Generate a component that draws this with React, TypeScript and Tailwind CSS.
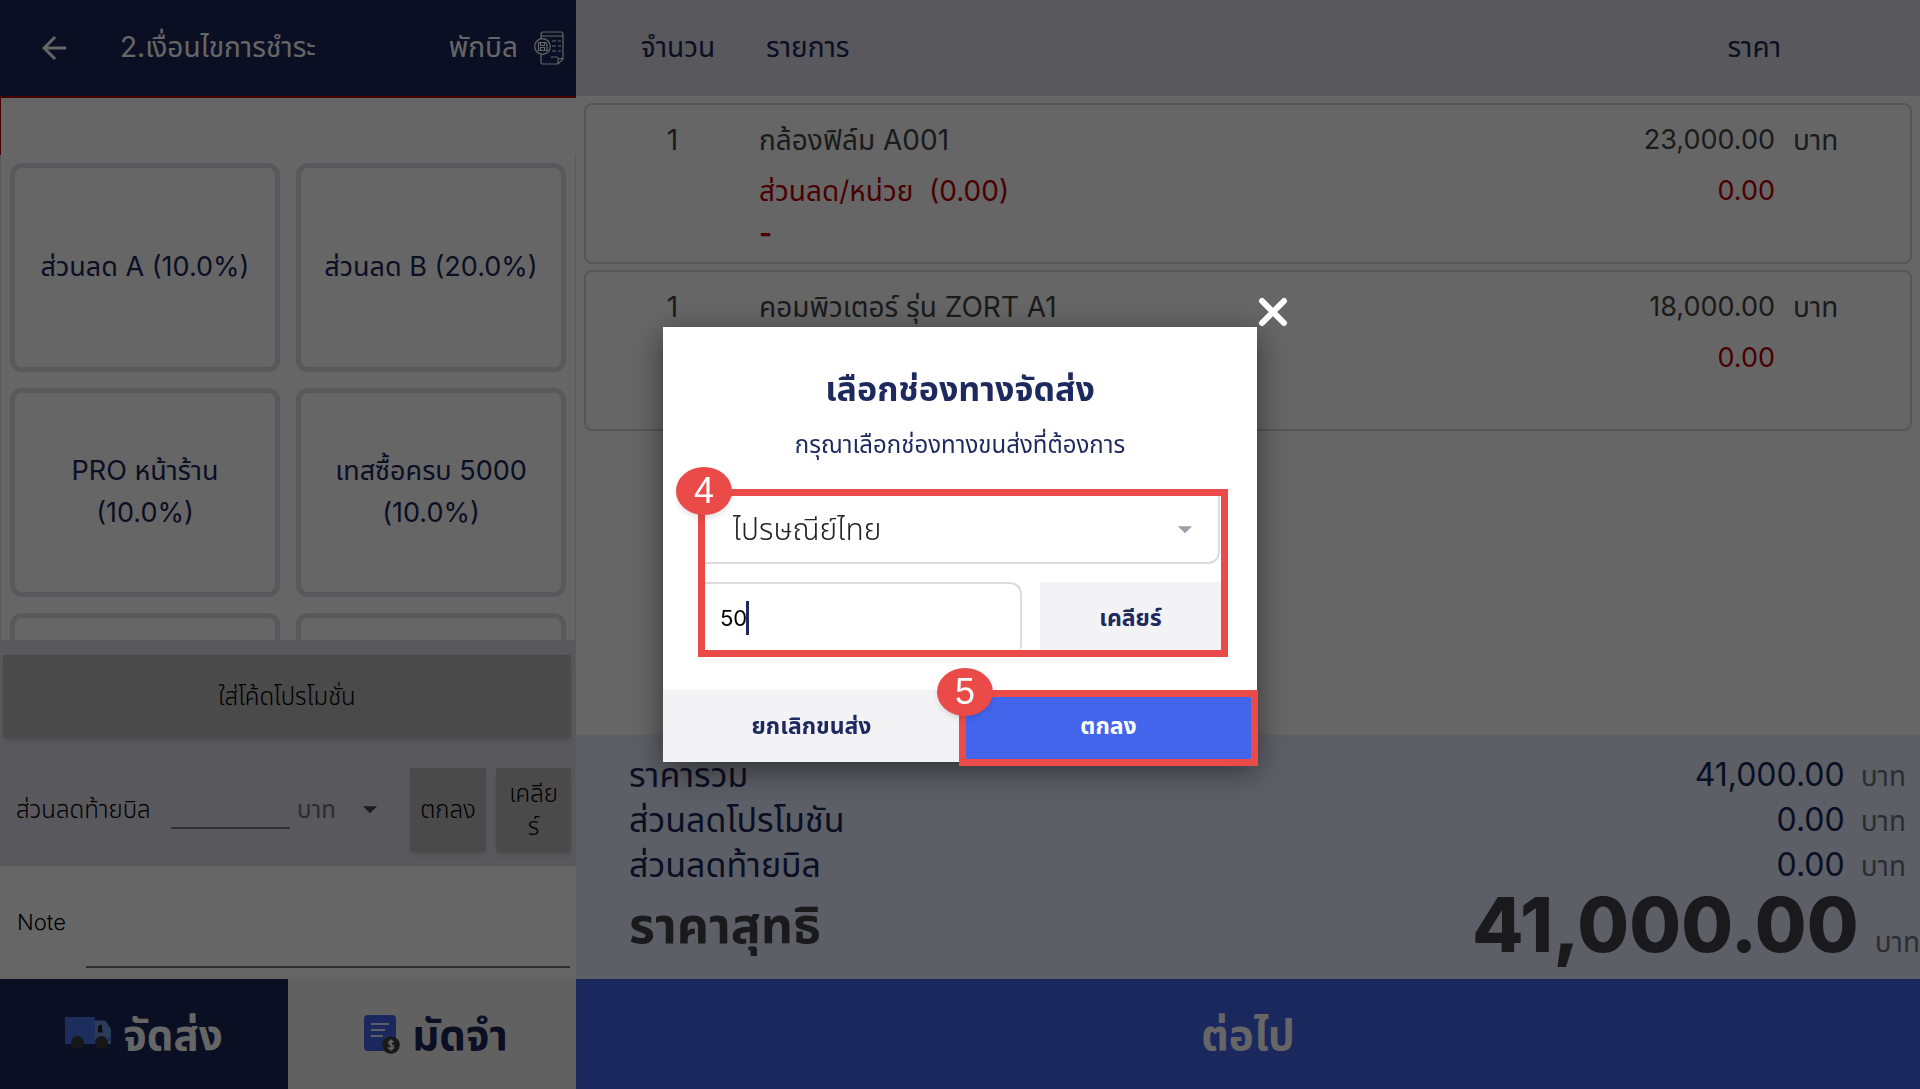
import { useState } from "react";
import { MdArrowBack, MdArrowDropDown } from "react-icons/md";

interface Promotion {
  id: string;
  name: string;
}

interface CartItem {
  id: string;
  qty: number;
  name: string;
  price: string;
  discount: string;
  unitDiscount?: string;
}

const PROMOTIONS: Promotion[] = [
  { id: "a", name: "ส่วนลด A (10.0%)" },
  { id: "b", name: "ส่วนลด B (20.0%)" },
  { id: "pro", name: "PRO หน้าร้าน (10.0%)" },
  { id: "test", name: "เทสซื้อครบ 5000 (10.0%)" },
  { id: "e", name: "" },
  { id: "f", name: "" },
];

const ITEMS: CartItem[] = [
  { id: "a001", qty: 1, name: "กล้องฟิล์ม A001", price: "23,000.00", discount: "0.00", unitDiscount: "0.00" },
  { id: "zort", qty: 1, name: "คอมพิวเตอร์ รุ่น ZORT A1", price: "18,000.00", discount: "0.00" },
];

const TOTALS = [
  { label: "ราคารวม", value: "41,000.00" },
  { label: "ส่วนลดโปรโมชัน", value: "0.00" },
  { label: "ส่วนลดท้ายบิล", value: "0.00" },
];

function HoldBillIcon() {
  return (
    <svg viewBox="0 0 30 34" className="h-[34px] w-[30px]" fill="none" stroke="currentColor" strokeWidth="1.2">
      <path d="M7 7.500V3a2 2 0 0 1 2-2h18a2 2 0 0 1 2 2v25l-5 5H8.500a1.500 1.500 0 0 1-1.500-1.500V23.500" />
      <path d="M7 5h22M29 27.500h-5V33" />
      <path d="M18 10h4M24 10h3M18 15h4M24 15h3M18 20h4M24 20h3M17 26h7" />
      <circle cx="8.500" cy="15.500" r="7.800" />
      <path d="M4.500 11.500h7l1.500 1.500v6.500H4.500zM6.500 11.500v3h4v-3M6.500 19.500v-3h4v3" />
    </svg>
  );
}

function TruckIcon() {
  return (
    <svg viewBox="0 0 46 36" className="h-9 w-[46px]">
      <path d="M0 1h30v27H0z" fill="#4a72e8" />
      <path d="M30 4.500h10.500L44 10l2 3v15H30z" fill="#6f93d8" />
      <path d="M33 16.500V12q0-3 3-3h1v4l1 3.500z" fill="#20202c" />
      <path d="M43 21h3v4h-3z" fill="#4a72e8" />
      <circle cx="12.500" cy="26.500" r="6.500" fill="#3b3b3b" />
      <circle cx="36.500" cy="26.500" r="6.500" fill="#3b3b3b" />
    </svg>
  );
}

function DepositIcon() {
  return (
    <svg viewBox="0 0 36 40" className="h-10 w-9" fill="none">
      <rect width="32" height="36" y="1" rx="4" fill="#4365ec" />
      <path d="M7 10h18M7 16h14M7 22h12" stroke="#e8ecff" strokeWidth="1.800" />
      <circle cx="27" cy="31" r="8.800" fill="#3f3f3f" />
      <path
        d="M29.500 28.500q-.6-1.500-2.500-1.500t-2.300 1.700q0 1.600 2.300 2.100t2.500 2.100q-.2 2-2.500 2t-2.600-1.800M27 25.500v11"
        stroke="#fff"
        strokeWidth="1.500"
      />
    </svg>
  );
}

/** Left column: promotions, end-of-bill discount and the note. */
function ConditionsPanel() {
  return (
    <section className="flex w-[30%] shrink-0 flex-col bg-white">
      <header className="flex h-24 shrink-0 items-center bg-[#1b2659] pr-3 pl-9 text-[28px] text-white">
        <button aria-label="ย้อนกลับ">
          <MdArrowBack className="size-9" />
        </button>
        <h1 className="ml-12 pb-[2px]">2.เงื่อนไขการชำระ</h1>
        <button className="ml-auto flex items-center gap-4">
          <span className="pb-[2px]">พักบิล</span>
          <HoldBillIcon />
        </button>
      </header>

      <input
        aria-label="ค้นหาโปรโมชัน"
        className="h-[59px] w-full shrink-0 border-t-2 border-l border-[#a80000] bg-white px-4 text-2xl outline-none"
      />

      <div className="grid min-h-0 flex-1 auto-rows-[209px] grid-cols-2 gap-4 overflow-hidden border-x border-[#e4e4e8] px-[9px] pt-2">
        {PROMOTIONS.map((p) => (
          <button
            key={p.id}
            aria-label={p.name || "โปรโมชัน"}
            className="rounded-xl border-[5px] border-[#dedce8] px-4 pb-[2px] text-[27px] leading-[42px] text-[#1b2659]"
          >
            {p.name}
          </button>
        ))}
      </div>

      <div className="shrink-0 bg-[#dedce8] pt-[15px] pr-[5px] pb-[14px] pl-[3px] text-[24px]">
        <button className="h-[83px] w-full bg-[#b8b8b8] font-light shadow-md">ใส่โค้ดโปรโมชั่น</button>
        <div className="mt-[30px] flex items-center">
          <label htmlFor="bill-discount" className="w-[168px] shrink-0 pl-[13px] font-light whitespace-nowrap">
            ส่วนลดท้ายบิล
          </label>
          <input
            id="bill-discount"
            className="h-[38px] w-[119px] min-w-0 border-b-2 border-[#77777c] bg-transparent outline-none"
          />
          <div className="relative ml-[7px] w-[90px] text-[#6f7075]">
            <select aria-label="หน่วยส่วนลด" className="w-full appearance-none bg-transparent outline-none">
              <option>บาท</option>
            </select>
            <MdArrowDropDown className="pointer-events-none absolute top-0 right-0 size-[34px] text-[#444448]" />
          </div>
          <button className="ml-auto h-[84px] w-[76px] bg-[#b8b8b8] font-light shadow-md">ตกลง</button>
          <button className="ml-[10px] h-[84px] w-[75px] bg-[#b8b8b8] px-3 leading-[33px] font-light break-all shadow-md">
            เคลียร์
          </button>
        </div>
      </div>

      <div className="flex h-[113px] shrink-0 items-center pr-[6px] pl-[17px] text-[22px]">
        <label htmlFor="note" className="w-[69px] font-light">
          Note
        </label>
        <input id="note" className="h-[90px] min-w-0 flex-1 border-b-2 border-[#77777c] outline-none" />
      </div>

      <div className="grid h-[110px] shrink-0 grid-cols-2 text-[42px] font-bold">
        <button className="flex items-center justify-center gap-3 bg-[#1b2659] text-white">
          <TruckIcon />
          จัดส่ง
        </button>
        <button className="flex items-center justify-center gap-3 bg-[#f3f3f3] pl-2 text-[#1b2659]">
          <DepositIcon />
          มัดจำ
        </button>
      </div>
    </section>
  );
}

/** Right column: cart lines and the bill total. */
function CartPanel() {
  return (
    <section className="flex min-w-0 flex-1 flex-col bg-white">
      <div className="min-h-0 flex-1 overflow-hidden">
        <table className="block text-[28px]">
          <thead className="block h-24 bg-[#dedce8] text-[#1b2659]">
            <tr className="grid h-full grid-cols-[176px_1fr_200px_125px] items-center px-[14px] pb-[2px]">
              <th className="font-normal">จำนวน</th>
              <th className="text-left font-normal">รายการ</th>
              <th className="text-right font-normal">ราคา</th>
            </tr>
          </thead>
          <tbody className="flex flex-col gap-[6px] px-2 pt-[7px] leading-[42px] text-[#444448]">
            {ITEMS.map((item) => (
              <tr
                key={item.id}
                className="grid h-[161px] grid-cols-[173px_1fr_200px_135px] rounded-lg border-2 border-[#d5d7e2] pt-[14px]"
              >
                <td className="text-center">{item.qty}</td>
                <td>
                  {item.name}
                  {item.unitDiscount && (
                    <>
                      <p className="mt-[9px] whitespace-pre text-[#b80000]">ส่วนลด/หน่วย  ({item.unitDiscount})</p>
                      <p className="font-bold text-[#b80000]">-</p>
                    </>
                  )}
                </td>
                <td className="text-right text-[27px]">
                  {item.price}
                  <p className="mt-[9px] text-[#b80000]">{item.discount}</p>
                </td>
                <td className="pl-[18px]">บาท</td>
              </tr>
            ))}
          </tbody>
        </table>
      </div>

      <dl className="h-[244px] shrink-0 bg-[#e6edff] pt-[17px] pl-[53px] text-[#1b2659]">
        {TOTALS.map((t) => (
          <div key={t.label} className="flex h-[45px] items-center justify-between pr-[14px]">
            <dt className="text-[34px] leading-[45px]">{t.label}</dt>
            <dd className="flex items-baseline gap-4 text-[32px] leading-[45px]">
              {t.value}
              <span className="text-[28px] leading-none text-[#6f7075]">บาท</span>
            </dd>
          </div>
        ))}
        <div className="flex h-[76px] items-center justify-between font-bold text-[#434348]">
          <dt className="text-[50px] leading-[74px]">ราคาสุทธิ</dt>
          <dd className="flex items-baseline gap-4 text-[75px] leading-[74px] font-extrabold">
            41,000.00
            <span className="text-[28px] leading-none font-normal text-[#6f7075]">บาท</span>
          </dd>
        </div>
      </dl>

      <button className="h-[110px] shrink-0 bg-[#4365ec] text-[42px] font-bold text-white">ต่อไป</button>
    </section>
  );
}

function StepBadge({ step }: { step: number }) {
  return (
    <span className="absolute -top-[29px] -left-[29px] z-10 flex h-12 w-14 items-center justify-center rounded-[50%] bg-[#ea4a48] font-['Liberation_Sans',sans-serif] text-[36px] font-normal text-white shadow-md">
      {step}
    </span>
  );
}

function ShippingDialog() {
  const [channel, setChannel] = useState("ไปรษณีย์ไทย");
  const [fee, setFee] = useState("50");

  return (
    <div className="fixed inset-0 flex items-center justify-center bg-black/60">
      <div
        role="dialog"
        aria-modal="true"
        aria-labelledby="shipping-title"
        className="relative w-[594px] bg-white text-[#1e2a5e] shadow-[0_8px_30px_rgba(0,0,0,0.5)]"
      >
        <button aria-label="ปิด" className="absolute -top-[31px] -right-8 text-white">
          <svg viewBox="0 0 32 32" className="size-8" stroke="currentColor" strokeWidth="6" strokeLinecap="round">
            <path d="M5 5l22 22M27 5L5 27" />
          </svg>
        </button>

        <h2 id="shipping-title" className="pt-9 text-center text-[34px] leading-[52px] font-bold">
          เลือกช่องทางจัดส่ง
        </h2>
        <p className="mt-[10px] text-center text-[24px] leading-10">กรุณาเลือกช่องทางขนส่งที่ต้องการ</p>

        <div className="relative mt-6 mr-[29px] ml-[35px] border-[7px] border-[#ea4a48]">
          <StepBadge step={4} />
          <div className="relative mr-px rounded-br-xl border-r-2 border-b-2 border-[#dadce2]">
            <select
              aria-label="ช่องทางขนส่ง"
              value={channel}
              onChange={(e) => setChannel(e.target.value)}
              className="h-[66px] w-full appearance-none bg-transparent pl-7 text-[30px] font-light text-[#222] outline-none"
            >
              <option>ไปรษณีย์ไทย</option>
            </select>
            <MdArrowDropDown className="pointer-events-none absolute top-4 right-4 size-[34px] text-[#9aa0ab]" />
          </div>
          <div className="mt-[18px] flex h-[68px]">
            <div className="flex flex-1 items-center rounded-tr-xl rounded-br-sm border-t-2 border-r-2 border-[#dadce2] pt-[2px] pl-[15px]">
              <input
                aria-label="ค่าขนส่ง"
                value={fee}
                onChange={(e) => setFee(e.target.value)}
                className="w-[26px] text-[22px] text-black outline-none"
              />
              <span className="h-[34px] w-[3px] bg-[#1e2a5e]" />
            </div>
            <button onClick={() => setFee("")} className="ml-[18px] w-[181px] bg-[#f3f3f6] pt-1 text-[23px] font-bold">
              เคลียร์
            </button>
          </div>
        </div>

        <div className="mt-[33px] grid h-[72px] grid-cols-2 text-[23px] font-bold">
          <button className="bg-[#f3f3f6]">ยกเลิกขนส่ง</button>
          <div className="relative -mr-px -mb-1 -ml-px border-[7px] border-[#ea4a48] bg-[#4365ec]">
            <StepBadge step={5} />
            <button className="h-full w-full pb-1 text-white">ตกลง</button>
          </div>
        </div>
      </div>
    </div>
  );
}

export default function App() {
  return (
    <main className="flex h-screen overflow-hidden font-[Inter,'Noto_Sans_Thai','Noto_Sans',sans-serif]">
      <ConditionsPanel />
      <CartPanel />
      <ShippingDialog />
    </main>
  );
}
